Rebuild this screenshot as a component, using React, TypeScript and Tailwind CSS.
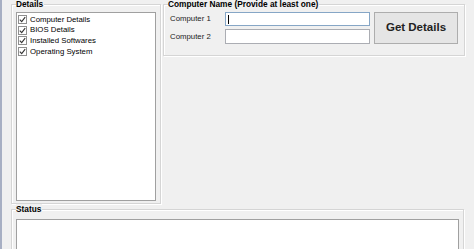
const font = { fontFamily: '"Liberation Sans", Arial, sans-serif' };

const GroupBox = ({
  label,
  className,
  children,
}: {
  label: string;
  className: string;
  children?: React.ReactNode;
}) => {
  return (
    <div
      className={`border border-[#d5d5d5] shadow-[inset_1px_1px_0_#ffffff,1px_1px_0_#ffffff] ${className}`}
    >
      {/* caption sits on the top border */}
      <div className="-mt-[6px] ml-[4px] h-[11px] w-fit bg-[#f0f0f0] pr-[1px] text-[8.3px] font-bold leading-[11px] text-black">
        {label}
      </div>
      {children}
    </div>
  );
};

const CheckItem = ({ text }: { text: string }) => {
  return (
    <div className="flex h-[10.8px] items-center">
      <div className="ml-[1px] flex h-[9px] w-[9px] items-center justify-center border border-[#8f8f8f] bg-white">
        <svg width="7" height="7" viewBox="0 0 7 7">
          <path d="M0.8 3.6 L2.7 5.6 L6.2 1.2" fill="none" stroke="#333" strokeWidth="1.1" />
        </svg>
      </div>
      <span className="ml-[3px] text-[7.8px] leading-none text-black">{text}</span>
    </div>
  );
};

export default function App() {
  return (
    <div className="flex h-[249px] w-[474px] overflow-hidden bg-[#f0f0f0]" style={font}>
      {/* window edge */}
      <div className="h-full w-[2px] shrink-0 bg-[#a7afc3]"></div>

      <div className="flex flex-col pl-[9px] pt-[4px]">
        <div className="flex items-start gap-[2px]">
          {/* Details */}
          <GroupBox label="Details" className="h-[200px] w-[150px]">
            <div className="ml-[4px] mt-[2px] h-[189px] w-[140px] border border-[#a0a0a0] bg-white pt-[1px]">
              <CheckItem text="Computer Details" />
              <CheckItem text="BIOS Details" />
              <CheckItem text="Installed Softwares" />
              <CheckItem text="Operating System" />
            </div>
          </GroupBox>

          {/* Computer Name */}
          <GroupBox label="Computer Name (Provide at least one)" className="h-[52px] w-[302px]">
            <div className="mt-[2px] flex items-start pl-[6px]">
              <div className="flex flex-col gap-[3px]">
                <div className="flex items-center">
                  <span className="w-[55px] text-[7.8px] text-[#222]">Computer 1</span>
                  <div className="flex h-[14px] w-[145px] items-center border border-[#86a6c6] bg-white">
                    <div className="ml-[2px] h-[9px] w-[1px] bg-black"></div>
                  </div>
                </div>
                <div className="flex items-center">
                  <span className="w-[55px] text-[7.8px] text-[#222]">Computer 2</span>
                  <div className="h-[15px] w-[145px] border border-[#abadb3] bg-white"></div>
                </div>
              </div>
              <button className="ml-[4px] flex h-[32px] w-[84px] items-center justify-center border border-[#adadad] bg-[#e5e5e5] text-[11.5px] font-bold text-[#222]">
                Get Details
              </button>
            </div>
          </GroupBox>
        </div>

        {/* Status */}
        <GroupBox label="Status" className="mt-[5px] h-[60px] w-[453px]">
          <div className="ml-[4px] mt-[4px] h-[40px] w-[443px] border border-[#a0a0a0] bg-white"></div>
        </GroupBox>
      </div>
    </div>
  );
}
